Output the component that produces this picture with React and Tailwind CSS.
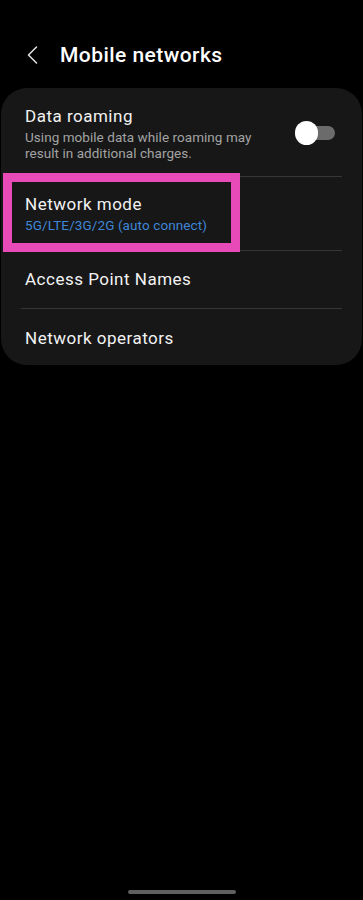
export default function App() {
  const font = { fontFamily: 'Roboto, "Noto Sans", sans-serif' }

  return (
    <div className="h-[900px] w-full bg-black flex flex-col text-[#f2f2f2]" style={font}>
      {/* Header */}
      <div className="pt-[40px] h-[70px] flex items-center">
        <div className="h-[30px] flex items-center">
          <svg className="ml-[27px]" width="11" height="18" viewBox="0 0 11 18" fill="none">
            <path d="M9.5 1 L1.5 9 L9.5 17" stroke="#e6e6e6" strokeWidth="1.5" strokeLinecap="round" strokeLinejoin="round" />
          </svg>
          <h1 className="ml-[22px] text-[21px] font-medium leading-[30px] tracking-[0.45px] text-white">Mobile networks</h1>
        </div>
      </div>

      {/* Card */}
      <div className="relative mt-[18px] mx-px rounded-[26px] bg-[#171717]">
        <div className="flex items-center pl-[24px] pr-[27px] pt-[17px] pb-[15px]">
          <div className="w-[258px]">
            <div className="text-[17px] leading-[22px] tracking-[0.5px]">Data roaming</div>
            <div className="mt-[2px] text-[13.5px] leading-[16px] tracking-[0.05px] text-[#a3a3a3]">
              Using mobile data while roaming may result in additional charges.
            </div>
          </div>
          <div className="ml-auto relative w-[40px] h-[24px] flex items-center">
            <div className="ml-[5px] w-[35px] h-[14px] rounded-full bg-[#6b6b6b]" />
            <div className="absolute left-0 top-0 w-[23px] h-[24px] rounded-full bg-white" />
          </div>
        </div>
        <div className="mx-[20px] h-px bg-[#363636]" />

        <div className="pl-[24px] pr-[20px] pt-[16px] pb-[17px]">
          <div className="text-[17px] leading-[22px] tracking-[0.5px]">Network mode</div>
          <div className="mt-[2px] text-[13.5px] leading-[16px] tracking-[0.1px] text-[#3f86d6]">5G/LTE/3G/2G (auto connect)</div>
        </div>
        <div className="mx-[20px] h-px bg-[#363636]" />

        <div className="pl-[24px] pt-[17px] pb-[18px] text-[17px] leading-[22px] tracking-[0.5px]">Access Point Names</div>
        <div className="mx-[20px] h-px bg-[#363636]" />

        <div className="pl-[24px] pt-[18px] pb-[16px] text-[17px] leading-[22px] tracking-[0.5px]">Network operators</div>

        {/* Highlight box */}
        <div className="absolute left-[2px] top-[85px] w-[237px] h-[79px] border-[9px] border-[#e84ab8]" />
      </div>

      {/* Gesture bar */}
      <div className="mt-auto mb-[6px] mx-auto w-[108px] h-[4px] rounded-full bg-[#5f5f5f]" />
    </div>
  )
}
